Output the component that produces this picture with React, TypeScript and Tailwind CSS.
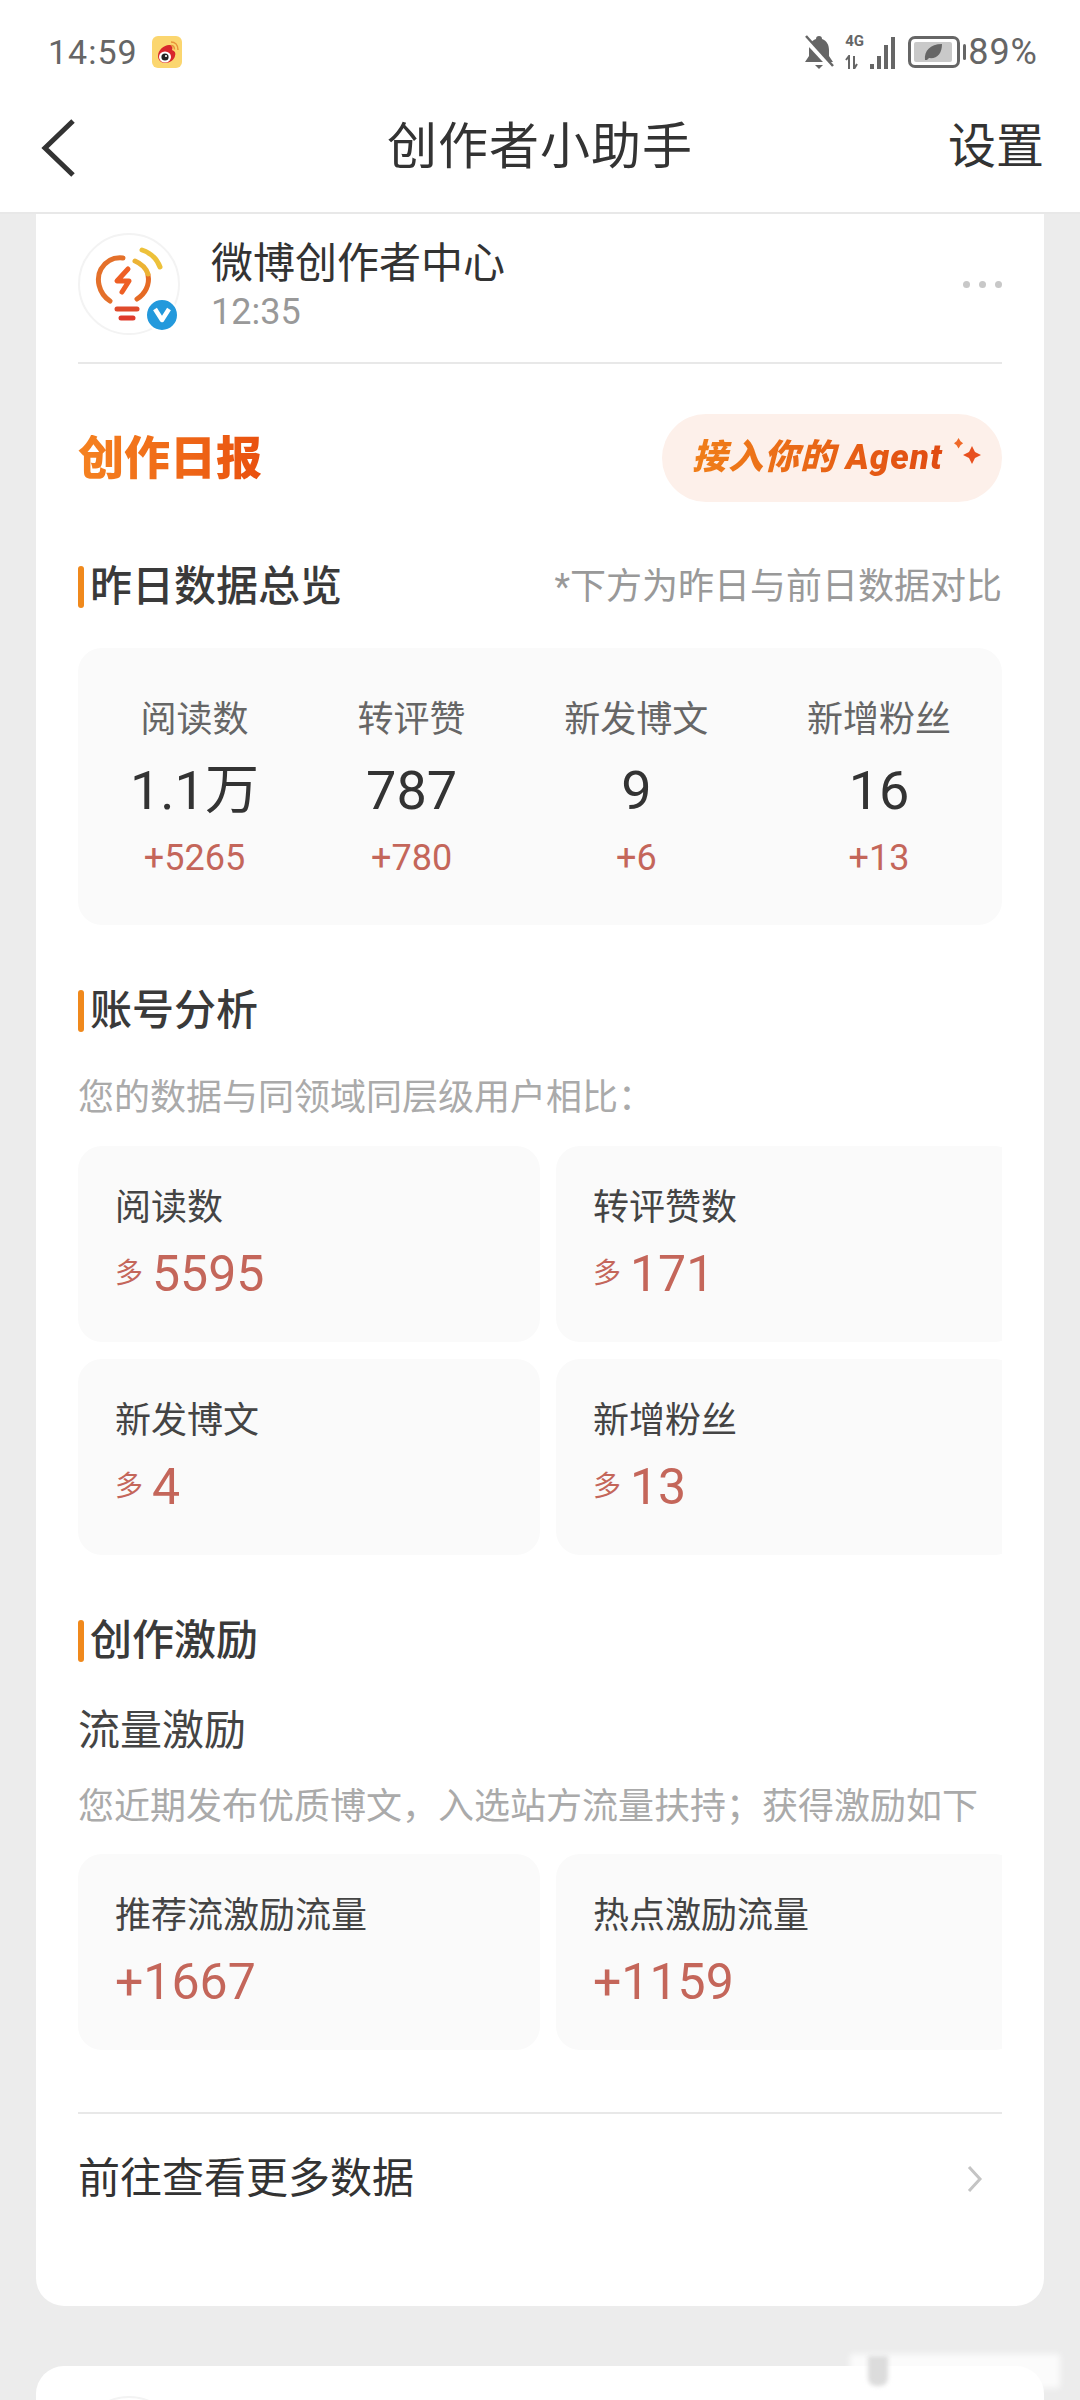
const fontStack = '[font-family:Roboto,"Noto_Sans_CJK_SC",sans-serif]'

const overview = [
  { label: '阅读数', value: '1.1万', delta: '+5265' },
  { label: '转评赞', value: '787', delta: '+780' },
  { label: '新发博文', value: '9', delta: '+6' },
  { label: '新增粉丝', value: '16', delta: '+13' },
]

const analysis = [
  { label: '阅读数', value: '5595' },
  { label: '转评赞数', value: '171' },
  { label: '新发博文', value: '4' },
  { label: '新增粉丝', value: '13' },
]

function WeiboBadge() {
  return (
    <svg width="32" height="34" viewBox="0 0 32 34" className="ml-[13px]">
      <rect x="1" y="1" width="30" height="32" rx="6" fill="#fbd66f" />
      <path d="M7 21c0-6 6-11 11-11 3 0 4 2 3 5 3 1 4 3 3 6-1 4-5 7-10 7-4 0-7-3-7-7z" fill="#d8262c" />
      <ellipse cx="14" cy="22" rx="6" ry="5.5" fill="#fff" />
      <circle cx="14" cy="22" r="3.6" fill="#222" />
      <circle cx="15" cy="21" r="1.1" fill="#fff" />
      <path d="M20 7c4 0 7 3 7 8M20 10.5c2.200 0 3.500 1.500 3.500 4" stroke="#e8923a" strokeWidth="1.500" fill="none" />
    </svg>
  )
}

function StatusIcons() {
  return (
    <div className="flex items-center text-[#666]">
      <svg width="32" height="36" viewBox="0 0 32 36" className="mr-[10px]">
        <path d="M16 2c2 0 3 1 3 3 5 2 7 6 7 11v6l4 6H2l4-6v-6c0-5 2-9 7-11 0-2 1-3 3-3z" fill="#666" />
        <path d="M12 31h8l-4 4z" fill="#666" />
        <path d="M1 4l27 29" stroke="#fff" strokeWidth="5" />
        <path d="M3 2l27 30" stroke="#666" strokeWidth="2.500" />
      </svg>
      <div className="relative mr-[13px] h-[34px] w-[50px]">
        <span className="absolute left-0 top-[-3px] text-[15px] font-bold leading-[18px]">4G</span>
        <svg width="20" height="14" viewBox="0 0 20 14" className="absolute bottom-0 left-0">
          <path d="M1 5l3-4v13M9 1v13l3-5" stroke="#666" strokeWidth="2" fill="none" />
        </svg>
        <div className="absolute bottom-0 right-0 flex items-end gap-[3px]">
          <div className="h-[5px] w-[4px] bg-[#666]" />
          <div className="h-[13px] w-[4px] bg-[#666]" />
          <div className="h-[24px] w-[4px] bg-[#666]" />
          <div className="h-[32px] w-[4px] bg-[#666]" />
        </div>
      </div>
      <div className="flex h-[32px] w-[52px] items-center rounded-[7px] border-[3px] border-[#666] p-[3px]">
        <div className="flex h-full w-[38px] items-center justify-center rounded-[2px] bg-[#c9c9c9]">
          <svg width="20" height="18" viewBox="0 0 20 18">
            <path d="M2 17C1 8 7 1 19 1c0 10-5 15-13 14l-2 2z" fill="#666" />
          </svg>
        </div>
      </div>
      <div className="ml-[3px] h-[16px] w-[3px] rounded-full bg-[#666]" />
      <span className="ml-[2px] text-[36px] leading-none tracking-[1px]">89%</span>
    </div>
  )
}

function Logo() {
  return (
    <div className="relative h-[102px] w-[102px] shrink-0 rounded-full border-2 border-[#f3f3f3] bg-white">
      <svg width="102" height="102" viewBox="0 0 102 102" className="absolute left-[-2px] top-[-2px]">
        <path d="M32 68C20 60 18 45 23 36c5-8 13-12 22-11" stroke="#e4702a" strokeWidth="5" strokeLinecap="round" fill="none" />
        <path d="M59 66c8-5 13-14 11-24" stroke="#e56a24" strokeWidth="5" strokeLinecap="round" fill="none" />
        <path d="M57 28c7 3 11 7 13 13" stroke="#ecb334" strokeWidth="5" strokeLinecap="round" fill="none" />
        <path d="M64 17c9 3 15 9 18 17" stroke="#edc13a" strokeWidth="5" strokeLinecap="round" fill="none" />
        <path d="M50 36l-11 12h12l-7 11" stroke="#ee5f24" strokeWidth="5" strokeLinecap="round" strokeLinejoin="round" fill="none" />
        <path d="M39 76h20" stroke="#df4a2b" strokeWidth="5" strokeLinecap="round" />
        <path d="M43 85h12" stroke="#df3a2b" strokeWidth="5" strokeLinecap="round" />
      </svg>
      <div className="absolute bottom-[1px] right-[-1px] flex h-[34px] w-[34px] items-center justify-center rounded-full border-2 border-white bg-[#2399dc]">
        <svg width="20" height="16" viewBox="0 0 20 16">
          <path d="M3 2l7 11 7-11" stroke="#fff" strokeWidth="4.500" strokeLinejoin="round" fill="none" />
        </svg>
      </div>
    </div>
  )
}

function SectionTitle({ title }: { title: string }) {
  return (
    <div className="flex items-center">
      <div className="h-[42px] w-[6px] rounded-full bg-[#f0891c]" />
      <h2 className="ml-[6px] text-[42px] font-medium leading-[50px] text-[#3a3a3a]">{title}</h2>
    </div>
  )
}

function MetricCard({ label, value, prefix }: { label: string; value: string; prefix?: string }) {
  return (
    <div className="h-[196px] rounded-[24px] bg-[#fafafa] pl-[37px] pt-[40px]">
      <p className="text-[36px] leading-[44px] text-[#444]">{label}</p>
      <p className="mt-[14px] flex h-[60px] items-center text-[#c4665a]">
        {prefix && <span className="mr-[9px] text-[28px]">{prefix}</span>}
        <span className="text-[50px] leading-none">{value}</span>
      </p>
    </div>
  )
}

export default function App() {
  return (
    <div className={`relative flex h-[2400px] w-[1080px] flex-col overflow-hidden bg-[#ececec] ${fontStack}`}>
      <header className="h-[214px] shrink-0 border-b-2 border-[#e8e8e8] bg-white">
        <div className="flex h-[104px] items-center justify-between pl-[48px] pr-[42px]">
          <div className="flex items-center">
            <span className="text-[34px] leading-none tracking-[1px] text-[#666]">14:59</span>
            <WeiboBadge />
          </div>
          <StatusIcons />
        </div>
        <div className="relative flex h-[86px] items-center justify-center">
          <svg width="36" height="60" viewBox="0 0 36 60" className="absolute left-[40px] top-[14px]">
            <path d="M33 3L5 30l28 27" stroke="#333" strokeWidth="5" fill="none" />
          </svg>
          <h1 className="text-[50px] leading-none tracking-[1px] text-[#333]">创作者小助手</h1>
          <span className="absolute right-[36px] text-[48px] leading-none text-[#333]">设置</span>
        </div>
      </header>

      <main className="mx-[36px] h-[2092px] shrink-0 rounded-b-[28px] bg-white px-[42px]">
        <div className="flex h-[150px] items-start border-b-2 border-[#e8e8e8] pt-[19px]">
          <Logo />
          <div className="ml-[31px] flex-1 pt-[6px]">
            <p className="text-[42px] leading-[50px] text-[#333]">微博创作者中心</p>
            <p className="text-[36px] leading-[46px] text-[#999]">12:35</p>
          </div>
          <div className="mt-[48px] flex gap-[9px]">
            <div className="h-[7px] w-[7px] rounded-full bg-[#c8c8c8]" />
            <div className="h-[7px] w-[7px] rounded-full bg-[#c8c8c8]" />
            <div className="h-[7px] w-[7px] rounded-full bg-[#c8c8c8]" />
          </div>
        </div>

        <div className="mt-[50px] flex h-[88px] items-center justify-between">
          <h2 className="bg-linear-to-r from-[#f58220] to-[#e9500f] bg-clip-text text-[46px] font-black leading-none text-transparent">
            创作日报
          </h2>
          <div className="relative flex h-[88px] w-[340px] items-center rounded-full bg-[#fdf0ea] pl-[30px]">
            <span className="bg-linear-to-r from-[#f07f1a] to-[#e04a12] bg-clip-text text-[35px] font-black italic leading-[44px] tracking-[1px] text-transparent">
              接入你的 Agent
            </span>
            <svg width="28" height="36" viewBox="0 0 28 36" className="absolute right-[20px] top-[24px]">
              <path d="M7 0l3 5 4 3-4 3-3 5-3-5-4-3 4-3z" fill="#ef6a2a" transform="scale(.65)" />
              <path d="M18 8l3 6 6 3-6 3-3 6-3-6-6-3 6-3z" fill="#e8501f" />
            </svg>
          </div>
        </div>

        <div className="mt-[60px] flex items-center justify-between">
          <SectionTitle title="昨日数据总览" />
          <p className="text-[36px] leading-[50px] text-[#999]">*下方为昨日与前日数据对比</p>
        </div>

        <div className="mt-[36px] flex h-[277px] justify-between rounded-[24px] bg-[#fafafa] pl-[52px] pr-[51px] pt-[48px]">
          {overview.map((item) => (
            <div key={item.label} className="flex flex-col items-center">
              <p className="text-[36px] leading-[48px] text-[#666]">{item.label}</p>
              <p className="mt-[15px] text-[54px] leading-[64px] text-[#333]">{item.value}</p>
              <p className="mt-[13px] text-[36px] leading-[44px] text-[#c4665a]">{item.delta}</p>
            </div>
          ))}
        </div>

        <div className="mt-[61px]">
          <SectionTitle title="账号分析" />
        </div>
        <p className="mt-[38px] text-[36px] leading-[48px] text-[#aaa]">您的数据与同领域同层级用户相比：</p>

        <div className="mt-[24px] grid grid-cols-[462px_462px] gap-x-[16px] gap-y-[17px] overflow-hidden">
          {analysis.map((item) => (
            <MetricCard key={item.label} label={item.label} value={item.value} prefix="多" />
          ))}
        </div>

        <div className="mt-[61px]">
          <SectionTitle title="创作激励" />
        </div>
        <p className="mt-[40px] text-[42px] leading-[50px] text-[#444]">流量激励</p>
        <p className="mt-[27px] whitespace-nowrap text-[36px] leading-[48px] text-[#aaa]">
          您近期发布优质博文，入选站方流量扶持；获得激励如下
        </p>

        <div className="mt-[23px] grid grid-cols-[462px_462px] gap-x-[16px] overflow-hidden">
          <MetricCard label="推荐流激励流量" value="+1667" />
          <MetricCard label="热点激励流量" value="+1159" />
        </div>

        <div className="mt-[62px] flex h-[132px] items-center justify-between border-t-2 border-[#e8e8e8]">
          <span className="text-[42px] leading-[50px] text-[#333]">前往查看更多数据</span>
          <svg width="18" height="28" viewBox="0 0 18 28" className="mr-[18px]">
            <path d="M3 2l11 12L3 26" stroke="#c4c4c4" strokeWidth="3" fill="none" />
          </svg>
        </div>
      </main>

      <section className="mx-[36px] mt-[60px] h-[200px] shrink-0 rounded-t-[28px] bg-white px-[42px] pt-[30px]">
        <div className="h-[102px] w-[102px] rounded-full border-2 border-[#f3f3f3]" />
      </section>

      {/* blurred gesture-bar smear over the bottom edge */}
      <div className="absolute left-[850px] top-[2354px] h-[34px] w-[210px] bg-white/80 blur-[3px]" />
      <div className="absolute left-[868px] top-[2356px] h-[30px] w-[20px] rounded-b-[8px] bg-[#dcdcdc] blur-[2px]" />
    </div>
  )
}
